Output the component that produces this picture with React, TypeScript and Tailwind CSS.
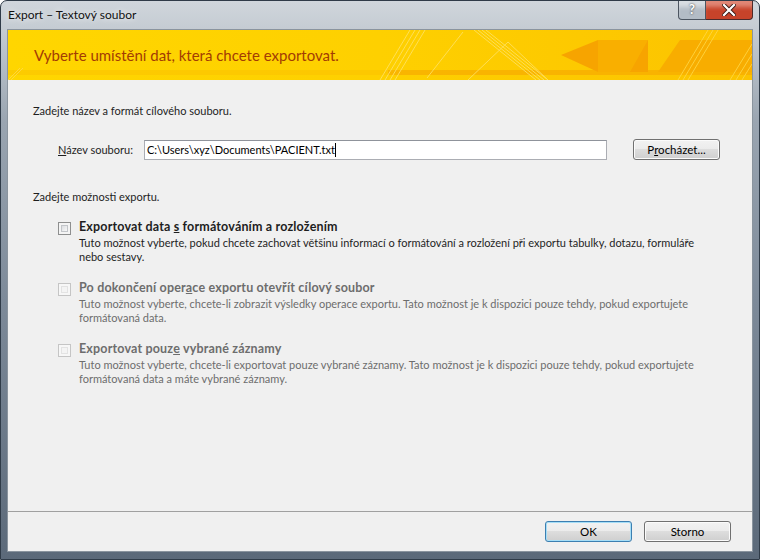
import React from "react";

const ui = "font-['Lato','Noto_Sans',sans-serif]";

function CheckBox({ disabled }: { disabled?: boolean }) {
  return disabled ? (
    <span className="mt-[3px] w-[13px] h-[13px] shrink-0 border border-[#c5c5c5] bg-[#f7f7f7] p-[2px]">
      <span className="block w-full h-full border border-[#e3e3e3] bg-[#f4f4f4]" />
    </span>
  ) : (
    <span className="mt-[3px] w-[13px] h-[13px] shrink-0 border border-[#8e8f8f] bg-[#f4f4f4] p-[2px]">
      <span className="block w-full h-full border border-[#c2c5c9] bg-gradient-to-br from-[#dcdee1] to-[#f8f8f8]" />
    </span>
  );
}

function Option({
  disabled,
  label,
  lines,
}: {
  disabled?: boolean;
  label: React.ReactNode;
  lines: string[];
}) {
  const tone = disabled ? "text-[#6d6d6d]" : "text-[#1e1e1e]";
  return (
    <div className="flex gap-[8px]">
      <CheckBox disabled={disabled} />
      <div>
        <div className={`h-[16px] leading-[16px] text-[12.5px] tracking-[0.17px] font-bold whitespace-nowrap ${tone}`}>
          {label}
        </div>
        <div className={`mt-[1px] text-[11px] leading-[14px] ${tone}`}>
          {lines.map((l) => (
            <div key={l} className="whitespace-nowrap">
              {l}
            </div>
          ))}
        </div>
      </div>
    </div>
  );
}

function Btn({ children, primary }: { children: React.ReactNode; primary?: boolean }) {
  return (
    <button
      className={`w-[87px] h-[21px] rounded-[3px] border text-[11.5px] leading-none text-black bg-[linear-gradient(#f2f2f2_0%,#ebebeb_50%,#dddddd_50%,#cfcfcf_100%)] ${
        primary
          ? "border-[#3c7fb1] shadow-[inset_0_0_0_1px_#a6def7]"
          : "border-[#707070] shadow-[inset_0_0_0_1px_#fbfbfb]"
      }`}
    >
      {children}
    </button>
  );
}

function HeaderArt() {
  return (
    <svg className="absolute inset-0" width="744" height="50" viewBox="0 0 744 50">
      <defs>
        <linearGradient id="hg" x1="0" x2="1" y1="0" y2="0">
          <stop offset="0" stopColor="#ffd600" />
          <stop offset="0.5" stopColor="#fed000" />
          <stop offset="1" stopColor="#fcc300" />
        </linearGradient>
      </defs>
      <rect width="744" height="50" fill="url(#hg)" />
      {/* lower band */}
      <rect y="40" width="744" height="5" fill="#fcc000" opacity="0.5" />
      <rect x="380" y="40" width="364" height="5" fill="#f7a800" opacity="0.6" />
      {/* diagonal stripes */}
      <g stroke="#ffe36a" strokeWidth="1" opacity="0.8">
        <line x1="372" y1="50" x2="402" y2="0" />
        <line x1="377" y1="50" x2="407" y2="0" />
        <line x1="382" y1="50" x2="412" y2="0" />
        <line x1="387" y1="50" x2="417" y2="0" />
        <line x1="419" y1="48" x2="455" y2="2" />
        <line x1="466" y1="0" x2="528" y2="50" />
        <line x1="470" y1="0" x2="532" y2="50" />
        <line x1="474" y1="0" x2="536" y2="50" />
        <line x1="478" y1="0" x2="540" y2="50" />
        <line x1="460" y1="50" x2="500" y2="12" />
        <line x1="500" y1="12" x2="540" y2="50" />
      </g>
      {/* orange arrow */}
      <polygon points="553,25 590,10 640,10 640,42 590,42" fill="#f7a400" />
      <polygon points="590,10 640,10 622,42 590,42" fill="#f9b300" opacity="0.7" />
      {/* right trapezoid */}
      <polygon points="650,42 672,10 744,10 744,42" fill="#f8ad00" />
      <g stroke="#ffd94a" strokeWidth="1" opacity="0.8">
        <line x1="670" y1="50" x2="700" y2="0" />
        <line x1="675" y1="50" x2="705" y2="0" />
        <line x1="680" y1="50" x2="710" y2="0" />
        <line x1="722" y1="50" x2="744" y2="14" />
        <line x1="728" y1="50" x2="744" y2="24" />
        <line x1="734" y1="50" x2="744" y2="34" />
        <line x1="0" y1="50" x2="12" y2="38" />
        <line x1="3" y1="50" x2="15" y2="38" />
      </g>
    </svg>
  );
}

export default function App() {
  return (
    <div className={`w-[760px] h-[560px] ${ui}`}>
      <div className="w-full h-full flex flex-col rounded-t-[7px] border border-[#2f3b48] bg-[linear-gradient(#d0d6dc_0px,#c4cbd2_30px,#9aa5b1_120px,#7d8a99_300px,#5b6979_560px)]">
        {/* title bar */}
        <div className="h-[28px] flex items-start justify-between pl-[7px]">
          <span className="mt-[6px] text-[12px] leading-[16px] text-[#111] [text-shadow:0_0_6px_#ffffff]">
            Export – Textový soubor
          </span>
          <div className="flex mr-[6px]">
            <div className="w-[28px] h-[19px] rounded-bl-[4px] border border-t-0 border-[#4c5561] bg-[#b3bcc6] shadow-[inset_0_8px_4px_-2px_rgba(255,255,255,0.5)] flex items-center justify-center text-[13px] font-bold text-white [text-shadow:0_0_2px_#222]">
              ?
            </div>
            <div className="w-[47px] h-[19px] rounded-br-[4px] border border-t-0 border-l-0 border-[#4c2a2a] bg-[#c7432a] shadow-[inset_0_8px_4px_-2px_rgba(255,220,210,0.45)] flex items-center justify-center">
              <svg width="14" height="12" viewBox="0 0 14 12">
                <path d="M2 1 L12 11 M12 1 L2 11" stroke="#3a1a14" strokeWidth="4" strokeLinecap="square" />
                <path d="M2 1 L12 11 M12 1 L2 11" stroke="#ffffff" strokeWidth="2.2" strokeLinecap="square" />
              </svg>
            </div>
          </div>
        </div>

        {/* client area */}
        <div className="flex-1 mx-[6px] mb-[7px] border border-[#8a949e] bg-[#f0f0f0] flex flex-col">
          <div className="relative h-[50px] shrink-0 overflow-hidden">
            <HeaderArt />
            <div className="relative pl-[26px] pt-[15px] text-[15px] leading-[20px] text-[#a33c04]">
              Vyberte umístění dat, která chcete exportovat.
            </div>
          </div>

          <div className="flex-1 pl-[25px] pt-[23px] text-[11px] text-[#1e1e1e]">
            <div className="leading-[15px]">Zadejte název a formát cílového souboru.</div>

            <div className="mt-[21px] flex items-center pl-[25px]">
              <label className="w-[86px] leading-[15px] whitespace-nowrap">
                <span className="underline">N</span>ázev souboru:
              </label>
              <div className="w-[463px] h-[20px] border border-[#abadb3] border-t-[#8f939b] bg-white flex items-center pl-[2px] leading-[15px] text-black whitespace-nowrap">
                C:\Users\xyz\Documents\PACIENT.txt
                <span className="w-px h-[14px] bg-black" />
              </div>
              <div className="ml-[26px]">
                <Btn>
                  P<span className="underline">r</span>ocházet...
                </Btn>
              </div>
            </div>

            <div className="mt-[29px] leading-[15px]">Zadejte možnosti exportu.</div>

            <div className="mt-[15px] pl-[25px] flex flex-col gap-[16px]">
              <Option
                label={
                  <>
                    Exportovat data <span className="underline">s</span> formátováním a rozložením
                  </>
                }
                lines={[
                  "Tuto možnost vyberte, pokud chcete zachovat většinu informací o formátování a rozložení při exportu tabulky, dotazu, formuláře",
                  "nebo sestavy.",
                ]}
              />
              <Option
                disabled
                label={
                  <>
                    Po dokončení oper<span className="underline">a</span>ce exportu otevřít cílový soubor
                  </>
                }
                lines={[
                  "Tuto možnost vyberte, chcete-li zobrazit výsledky operace exportu. Tato možnost je k dispozici pouze tehdy, pokud exportujete",
                  "formátovaná data.",
                ]}
              />
              <Option
                disabled
                label={
                  <>
                    Exportovat pouz<span className="underline">e</span> vybrané záznamy
                  </>
                }
                lines={[
                  "Tuto možnost vyberte, chcete-li exportovat pouze vybrané záznamy. Tato možnost je k dispozici pouze tehdy, pokud exportujete",
                  "formátovaná data a máte vybrané záznamy.",
                ]}
              />
            </div>
          </div>

          <div className="h-[40px] shrink-0 border-t border-[#a0a0a0] flex items-center justify-end gap-[12px] pr-[21px]">
            <Btn primary>OK</Btn>
            <Btn>Storno</Btn>
          </div>
        </div>
      </div>
    </div>
  );
}
